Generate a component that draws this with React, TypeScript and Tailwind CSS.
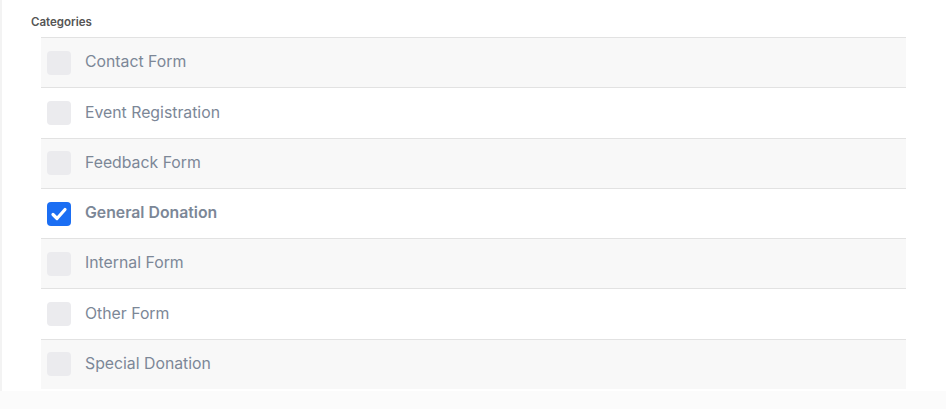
const categories = [
  { name: 'Contact Form', checked: false },
  { name: 'Event Registration', checked: false },
  { name: 'Feedback Form', checked: false },
  { name: 'General Donation', checked: true },
  { name: 'Internal Form', checked: false },
  { name: 'Other Form', checked: false },
  { name: 'Special Donation', checked: false },
];

const App = () => {
  return (
    <div className="min-h-[409px] bg-[#fbfbfb] font-['Inter','Noto_Sans',sans-serif]">
      <div className="border-l-2 border-[#f3f3f3] bg-white pb-[2px] pl-[29px] pr-[40px] pt-[15px]">
        <h3 className="text-[11.5px] font-semibold leading-[15px] text-[#555555]">Categories</h3>
        <ul className="ml-[10px] mt-[7px]">
          {categories.map((c, i) => (
            <li
              key={c.name}
              className={`flex h-[50.3px] items-center gap-[14px] border-t border-[#e2e2e2] px-[6px] ${
                i % 2 === 0 ? 'bg-[#f8f8f8]' : 'bg-white'
              }`}
            >
              {c.checked ? (
                <span className="flex h-6 w-6 items-center justify-center rounded-[4px] bg-[#1b6ef3]">
                  <svg viewBox="0 0 24 24" className="h-6 w-6" fill="none">
                    <path
                      d="M6 12.5l4 4 8-9"
                      stroke="white"
                      strokeWidth="3.2"
                      strokeLinecap="round"
                      strokeLinejoin="round"
                    />
                  </svg>
                </span>
              ) : (
                <span className="h-6 w-6 rounded-[4px] bg-[#ebebee]" />
              )}
              <span
                className={`-mt-px text-[15.8px] text-[#7c8797] ${c.checked ? 'font-semibold' : 'font-normal'}`}
              >
                {c.name}
              </span>
            </li>
          ))}
        </ul>
      </div>
    </div>
  );
};

export default App;
